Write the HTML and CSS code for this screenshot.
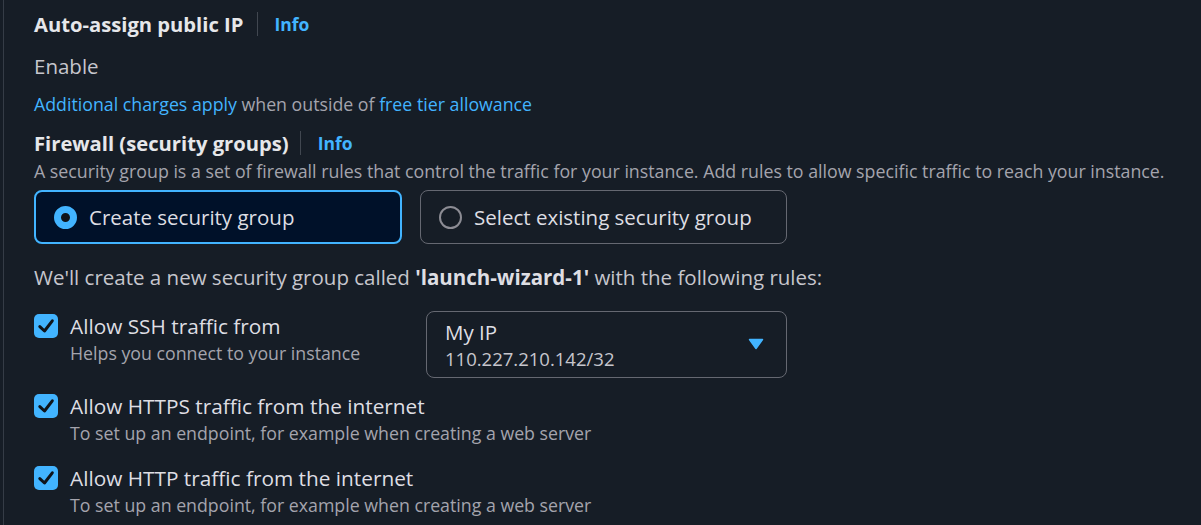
FILE: index.html
```html
<!DOCTYPE html>
<html>
<head>
<meta charset="utf-8">
<link rel="stylesheet" href="styles.css">
</head>
<body>
<div class="panel">
  <div class="field-head">
    <span class="label">Auto-assign public IP</span>
    <span class="divider"></span>
    <a class="info">Info</a>
  </div>
  <div class="value">Enable</div>
  <div class="note"><a class="link">Additional charges apply</a> when outside of <a class="link">free tier allowance</a></div>

  <div class="field-head fw">
    <span class="label">Firewall (security groups)</span>
    <span class="divider d2"></span>
    <a class="info">Info</a>
  </div>
  <div class="desc">A security group is a set of firewall rules that control the traffic for your instance. Add rules to allow specific traffic to reach your instance.</div>

  <div class="tiles">
    <div class="tile selected"><span class="radio on"></span><span>Create security group</span></div>
    <div class="tile"><span class="radio"></span><span>Select existing security group</span></div>
  </div>

  <div class="intro">We'll create a new security group called <b>'launch-wizard-1'</b> with the following rules:</div>

  <div class="rule ssh">
    <div class="check-row">
      <span class="checkbox"><svg viewBox="0 0 24 24" width="24" height="24"><path d="M5.8 12.6l4.7 4.4 7.8-10.2" fill="none" stroke="#0f141a" stroke-width="3" stroke-linecap="round" stroke-linejoin="round"/></svg></span>
      <div class="check-text">
        <div class="check-label">Allow SSH traffic from</div>
        <div class="check-desc">Helps you connect to your instance</div>
      </div>
    </div>
    <div class="select">
      <div class="select-text">
        <div class="select-main">My IP</div>
        <div class="select-sub">110.227.210.142/32</div>
      </div>
      <svg class="caret" viewBox="0 0 16 12" width="16" height="12"><path d="M1.5 1.5h13L8 10.5z" fill="#42b4ff" stroke="#42b4ff" stroke-width="1.5" stroke-linejoin="round"/></svg>
    </div>
  </div>

  <div class="rule https">
    <div class="check-row">
      <span class="checkbox"><svg viewBox="0 0 24 24" width="24" height="24"><path d="M5.8 12.6l4.7 4.4 7.8-10.2" fill="none" stroke="#0f141a" stroke-width="3" stroke-linecap="round" stroke-linejoin="round"/></svg></span>
      <div class="check-text">
        <div class="check-label">Allow HTTPS traffic from the internet</div>
        <div class="check-desc">To set up an endpoint, for example when creating a web server</div>
      </div>
    </div>
  </div>

  <div class="rule http">
    <div class="check-row">
      <span class="checkbox"><svg viewBox="0 0 24 24" width="24" height="24"><path d="M5.8 12.6l4.7 4.4 7.8-10.2" fill="none" stroke="#0f141a" stroke-width="3" stroke-linecap="round" stroke-linejoin="round"/></svg></span>
      <div class="check-text">
        <div class="check-label">Allow HTTP traffic from the internet</div>
        <div class="check-desc">To set up an endpoint, for example when creating a web server</div>
      </div>
    </div>
  </div>
</div>
</body>
</html>
```
FILE: styles.css
```css
html, body {
  margin: 0;
  padding: 0;
  background: #161d26;
  height: 100%;
}
body {
  font-family: "Open Sans", "Noto Sans", sans-serif;
  color: #dedee3;
  overflow: hidden;
}
.panel {
  margin-left: 3px;
  border-left: 1px solid #353c46;
  padding-left: 30px;
  min-height: 525px;
  box-sizing: border-box;
}
.field-head {
  display: flex;
  align-items: center;
  height: 24px;
  padding-top: 12px;
}
.label {
  font-weight: 700;
  font-size: 20.2px;
  color: #e6e7ea;
  white-space: nowrap;
}
.divider {
  width: 1px;
  height: 24px;
  background: #414750;
  margin: 0 16px 0 14px;
  flex: none;
}
.divider.d2 { margin: 0 17px 0 11px; }
.info {
  color: #42b4ff;
  font-weight: 700;
  font-size: 17.5px;
}
.value {
  font-size: 20.5px;
  color: #c6c6cd;
  margin-top: 17px;
  line-height: 26px;
}
.note {
  font-size: 17.75px;
  color: #a4a4ad;
  margin-top: 13px;
  line-height: 24px;
  white-space: nowrap;
}
.link { color: #42b4ff; }
.fw { padding-top: 15px; }
.desc {
  font-size: 17.8px;
  color: #a4a4ad;
  line-height: 24px;
  margin-top: 4px;
  white-space: nowrap;
}
.tiles {
  display: flex;
  gap: 18px;
  margin-top: 7px;
}
.tile {
  width: 367px;
  height: 54px;
  box-sizing: border-box;
  border: 1px solid #656871;
  border-radius: 8px;
  display: flex;
  align-items: center;
  padding-left: 18px;
  gap: 12px;
  font-size: 20.5px;
  color: #dedee3;
  white-space: nowrap;
}
.tile.selected {
  width: 368px;
  border: 2px solid #42b4ff;
  background: #001129;
  padding-left: 18px;
}
.radio {
  width: 23px;
  height: 23px;
  box-sizing: border-box;
  border-radius: 50%;
  border: 2px solid #8c8c94;
  flex: none;
}
.radio.on {
  border: 7px solid #42b4ff;
  background: #0f141a;
}
.intro {
  font-size: 20.5px;
  color: #c6c6cd;
  margin-top: 20px;
  line-height: 26px;
  white-space: nowrap;
}
.intro b { color: #dedee3; }
.rule {
  display: flex;
  align-items: flex-start;
}
.rule.ssh { margin-top: 22px; }
.rule.https { margin-top: 14px; }
.rule.http { margin-top: 18px; }
.check-row {
  display: flex;
  gap: 12px;
}
.ssh .check-row { width: 392px; flex: none; }
.checkbox {
  width: 24px;
  height: 24px;
  flex: none;
  border-radius: 5px;
  background: #42b4ff;
  margin-top: 2px;
  display: flex;
}
.check-label {
  font-size: 20.8px;
  color: #dedee3;
  line-height: 28px;
  white-space: nowrap;
}
.check-desc {
  font-size: 17.75px;
  color: #a4a4ad;
  line-height: 26px;
  white-space: nowrap;
}
.select {
  width: 361px;
  height: 67px;
  box-sizing: border-box;
  border: 1px solid #656871;
  border-radius: 8px;
  display: flex;
  align-items: flex-start;
  padding: 7px 22px 0 18px;
  margin-top: -1px;
  flex: none;
}
.select-text { flex: 1; }
.select-main {
  font-size: 20.5px;
  color: #dedee3;
  line-height: 26px;
}
.select-sub {
  font-size: 18.5px;
  color: #c6c6cd;
  line-height: 28px;
}
.caret { margin-top: 19px; }
```
